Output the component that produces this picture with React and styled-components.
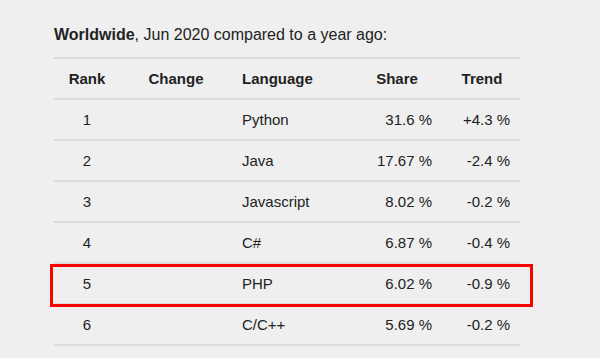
import React from 'react'
import styled, { createGlobalStyle } from 'styled-components';

const GlobalStyle = createGlobalStyle`
  body {
    margin: 0;
    background: #efefef;
    font-family: "Liberation Sans", Arial, sans-serif;
    color: #222;
  }
`;

const rows = [
  { rank: 1, change: "", language: "Python", share: "31.6 %", trend: "+4.3 %" },
  { rank: 2, change: "", language: "Java", share: "17.67 %", trend: "-2.4 %" },
  { rank: 3, change: "", language: "Javascript", share: "8.02 %", trend: "-0.2 %" },
  { rank: 4, change: "", language: "C#", share: "6.87 %", trend: "-0.4 %" },
  { rank: 5, change: "", language: "PHP", share: "6.02 %", trend: "-0.9 %", marked: true },
  { rank: 6, change: "", language: "C/C++", share: "5.69 %", trend: "-0.2 %" },
];

const App = () => {
  return <>
    <GlobalStyle />
    <Page>
      <Title><b>Worldwide</b>, Jun 2020 compared to a year ago:</Title>
      <Table>
        <Head>
          <Cell $align="center">Rank</Cell>
          <Cell $align="center">Change</Cell>
          <Cell $align="left">Language</Cell>
          <Cell $align="center">Share</Cell>
          <Cell $align="center">Trend</Cell>
        </Head>
        {rows.map((r) => {
          return <Row key={r.rank} $marked={r.marked}>
            <Cell $align="center">{r.rank}</Cell>
            <Cell $align="center">{r.change}</Cell>
            <Cell $align="left">{r.language}</Cell>
            <Cell $align="right" $pad={12}>{r.share}</Cell>
            <Cell $align="right" $pad={10}>{r.trend}</Cell>
          </Row>
        })}
      </Table>
    </Page>
  </>
}

const Page = styled.div`
  padding: 26px 0 0 54px;
`;

const Title = styled.div`
  font-size: 16px;
  line-height: 18px;
  margin-bottom: 13px;
  b {
    font-weight: 700;
  }
`;

const Table = styled.div`
  width: 466px;
  border-top: 2px solid #dcdcdc;
`;

const Row = styled.div`
  position: relative;
  display: grid;
  grid-template-columns: 66px 112px 118px 94px 76px;
  align-items: center;
  height: 39px;
  border-bottom: 2px solid #dcdcdc;
  font-size: 15px;
  ${(p) => p.$marked && `
    &::after {
      content: "";
      position: absolute;
      left: -4px;
      right: -13px;
      top: 0;
      bottom: -4px;
      border: 3px solid #f00;
      pointer-events: none;
    }
  `}
`;

const Head = styled(Row)`
  font-weight: 700;
`;

const Cell = styled.div`
  text-align: ${(p) => p.$align};
  padding-left: ${(p) => (p.$align === 'left' ? '10px' : '0')};
  padding-right: ${(p) => (p.$pad ? p.$pad + 'px' : '0')};
  white-space: nowrap;
`;

export default App
